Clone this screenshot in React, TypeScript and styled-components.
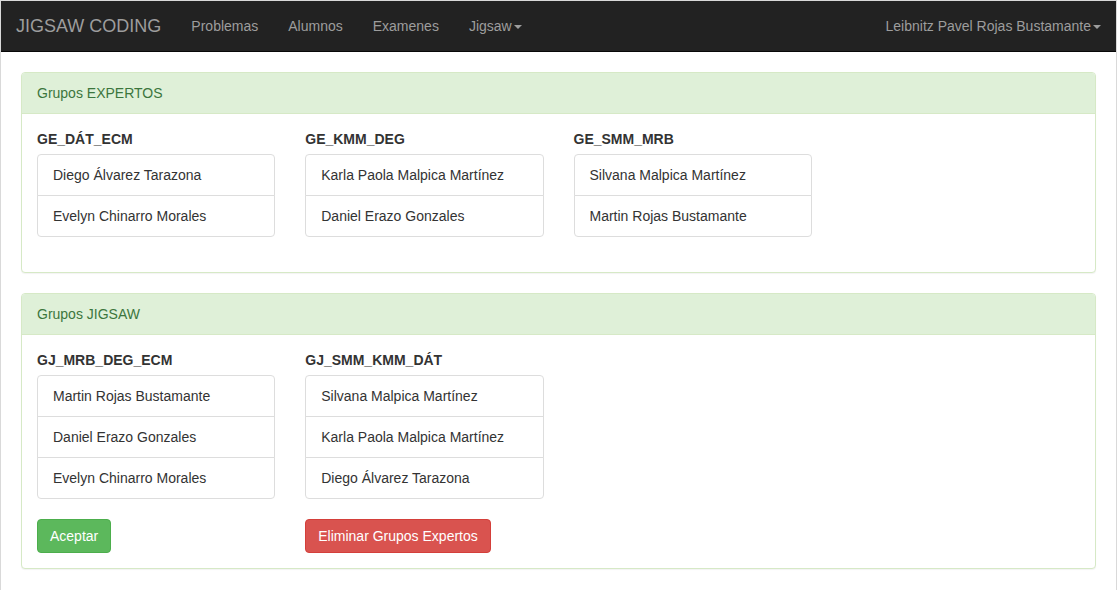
import React from 'react';
import styled, { createGlobalStyle } from 'styled-components';

const GlobalStyle = createGlobalStyle`
  * {
    box-sizing: border-box;
  }

  body {
    margin: 0;
    font-family: 'Liberation Sans', Arial, Helvetica, sans-serif;
    font-size: 14px;
    line-height: 1.42857143;
    color: #333;
    background: #fff;
  }
`;

const Frame = styled.div`
  min-height: 100vh;
  border: 1px solid #d9d9d9;
  border-bottom: none;
`;

const Navbar = styled.nav`
  display: flex;
  justify-content: space-between;
  align-items: stretch;
  height: 51px;
  padding: 0 15px;
  background-color: #222;
  border-bottom: 1px solid #080808;
  margin-bottom: 20px;
`;

const NavGroup = styled.ul<{ $right?: boolean }>`
  display: flex;
  list-style: none;
  margin: 0 ${({ $right }) => ($right ? '-15px' : '0')} 0 0;
  padding: 0;
`;

const Brand = styled.a`
  display: block;
  margin-left: -15px;
  padding: 15px;
  height: 50px;
  font-size: 18px;
  line-height: 20px;
  color: #9d9d9d;
  text-decoration: none;
`;

const NavLink = styled.a`
  display: block;
  padding: 15px;
  line-height: 20px;
  color: #9d9d9d;
  text-decoration: none;
  cursor: pointer;

  &:hover {
    color: #fff;
  }
`;

const Caret = styled.span`
  display: inline-block;
  width: 0;
  height: 0;
  margin-left: 2px;
  vertical-align: middle;
  border-top: 4px solid;
  border-right: 4px solid transparent;
  border-left: 4px solid transparent;
`;

const Content = styled.main`
  padding: 0 20px;
`;

const Panel = styled.section`
  margin-bottom: 20px;
  background-color: #fff;
  border: 1px solid #d6e9c6;
  border-radius: 4px;
  box-shadow: 0 1px 1px rgba(0, 0, 0, 0.05);
`;

const PanelHeading = styled.div`
  padding: 10px 15px;
  color: #3c763d;
  background-color: #dff0d8;
  border-bottom: 1px solid #d6e9c6;
  border-top-left-radius: 3px;
  border-top-right-radius: 3px;
`;

const PanelBody = styled.div`
  display: grid;
  grid-template-columns: repeat(4, 1fr);
  column-gap: 30px;
  padding: 15px;
`;

const Group = styled.div`
  display: flex;
  flex-direction: column;
  align-items: flex-start;
  min-width: 0;
`;

const GroupLabel = styled.label`
  display: inline-block;
  margin-bottom: 5px;
  font-weight: 700;
`;

const ListGroup = styled.ul`
  align-self: stretch;
  margin: 0 0 20px;
  padding: 0;
  list-style: none;
`;

const ListItem = styled.li`
  position: relative;
  display: block;
  padding: 10px 15px;
  margin-bottom: -1px;
  background-color: #fff;
  border: 1px solid #ddd;

  &:first-child {
    border-top-left-radius: 4px;
    border-top-right-radius: 4px;
  }

  &:last-child {
    margin-bottom: 0;
    border-bottom-left-radius: 4px;
    border-bottom-right-radius: 4px;
  }
`;

const Button = styled.button<{ $variant: 'success' | 'danger' }>`
  display: inline-block;
  padding: 6px 12px;
  font-family: inherit;
  font-size: 14px;
  line-height: 1.42857143;
  color: #fff;
  border: 1px solid
    ${({ $variant }) => ($variant === 'success' ? '#4cae4c' : '#d43f3a')};
  background-color: ${({ $variant }) =>
    $variant === 'success' ? '#5cb85c' : '#d9534f'};
  border-radius: 4px;
  cursor: pointer;
`;

type TGroup = {
  name: string;
  members: string[];
  action?: { label: string; variant: 'success' | 'danger' };
};

const expertos: TGroup[] = [
  {
    name: 'GE_DÁT_ECM',
    members: ['Diego Álvarez Tarazona', 'Evelyn Chinarro Morales']
  },
  {
    name: 'GE_KMM_DEG',
    members: ['Karla Paola Malpica Martínez', 'Daniel Erazo Gonzales']
  },
  {
    name: 'GE_SMM_MRB',
    members: ['Silvana Malpica Martínez', 'Martin Rojas Bustamante']
  }
];

const jigsaw: TGroup[] = [
  {
    name: 'GJ_MRB_DEG_ECM',
    members: [
      'Martin Rojas Bustamante',
      'Daniel Erazo Gonzales',
      'Evelyn Chinarro Morales'
    ],
    action: { label: 'Aceptar', variant: 'success' }
  },
  {
    name: 'GJ_SMM_KMM_DÁT',
    members: [
      'Silvana Malpica Martínez',
      'Karla Paola Malpica Martínez',
      'Diego Álvarez Tarazona'
    ],
    action: { label: 'Eliminar Grupos Expertos', variant: 'danger' }
  }
];

const GroupPanel: React.FC<{ title: string; groups: TGroup[] }> = ({
  title,
  groups
}) => (
  <Panel>
    <PanelHeading>{title}</PanelHeading>
    <PanelBody>
      {groups.map(group => (
        <Group key={group.name}>
          <GroupLabel>{group.name}</GroupLabel>
          <ListGroup>
            {group.members.map(member => (
              <ListItem key={member}>{member}</ListItem>
            ))}
          </ListGroup>
          {group.action && (
            <Button type="button" $variant={group.action.variant}>
              {group.action.label}
            </Button>
          )}
        </Group>
      ))}
    </PanelBody>
  </Panel>
);

const App: React.FC = () => {
  return (
    <Frame>
      <GlobalStyle />
      <Navbar>
        <NavGroup>
          <li>
            <Brand href="#">JIGSAW CODING</Brand>
          </li>
          <li>
            <NavLink>Problemas</NavLink>
          </li>
          <li>
            <NavLink>Alumnos</NavLink>
          </li>
          <li>
            <NavLink>Examenes</NavLink>
          </li>
          <li>
            <NavLink>
              Jigsaw
              <Caret />
            </NavLink>
          </li>
        </NavGroup>
        <NavGroup $right>
          <li>
            <NavLink>
              Leibnitz Pavel Rojas Bustamante
              <Caret />
            </NavLink>
          </li>
        </NavGroup>
      </Navbar>
      <Content>
        <GroupPanel title="Grupos EXPERTOS" groups={expertos} />
        <GroupPanel title="Grupos JIGSAW" groups={jigsaw} />
      </Content>
    </Frame>
  );
};

export default App;
